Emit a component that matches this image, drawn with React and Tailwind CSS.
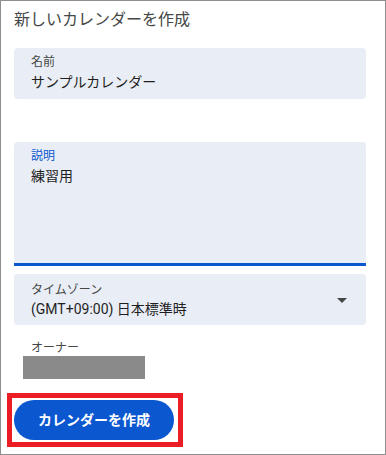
// App.jsx — new calendar form
const FONT = "font-['Roboto','Noto_Sans_CJK_JP',sans-serif]";

function FilledField({ label, value }) {
  return (
    <div className="w-[352px] h-[51px] rounded-[4px] bg-[#e9edf5] pl-[17px] pt-[6px]">
      <div className="text-[12px] leading-4 text-[#444746]">{label}</div>
      <div className="mt-[2px] text-[14px] leading-5 text-[#1f1f1f]">{value}</div>
    </div>
  );
}

export default function App() {
  return (
    <div className={`${FONT} w-[386px] h-[455px] border border-[#8e8e8e] bg-white`}>
      <div className="pl-[13px] pt-[7px]">
        <h1 className="text-[16px] leading-6 text-[#444746]">新しいカレンダーを作成</h1>

        <div className="mt-[16px]">
          <FilledField label="名前" value="サンプルカレンダー" />
        </div>

        {/* description (focused) */}
        <div className="mt-[43px] w-[352px] h-[124px] rounded-t-[4px] bg-[#e9edf5] border-b-[3px] border-[#0b57d0] pl-[17px] pt-[6px]">
          <div className="text-[12px] leading-4 text-[#0b57d0]">説明</div>
          <div className="mt-[2px] text-[14px] leading-5 text-[#1f1f1f]">練習用</div>
        </div>

        {/* timezone select */}
        <div className="mt-[8px] w-[352px] h-[51px] rounded-[4px] bg-[#e9edf5] pl-[17px] pr-[19px] pt-[8px] flex items-start justify-between">
          <div>
            <div className="text-[12px] leading-4 text-[#444746]">タイムゾーン</div>
            <div className="mt-[1px] text-[14px] leading-5 text-[#1f1f1f]">(GMT+09:00) 日本標準時</div>
          </div>
          <svg width="10" height="5" viewBox="0 0 10 5" className="mt-[16px]">
            <polygon points="0,0 10,0 5,5" fill="#444746" />
          </svg>
        </div>

        {/* owner */}
        <div className="mt-[15px] pl-[17px] text-[12px] leading-4 text-[#444746]">オーナー</div>
        <div className="ml-[9px] w-[122px] h-[23px] bg-[#8a8a8a]" />
      </div>

      <div className="pl-[6px] mt-[14px]">
        <div className="inline-flex border-[5px] border-[#ec1c24] pt-[2px] pb-[2px] pl-[2px] pr-[4px]">
          <button className="w-[160px] h-[40px] rounded-full bg-[#0b57d0] text-white text-[14px] font-bold">
            カレンダーを作成
          </button>
        </div>
      </div>
    </div>
  );
}
